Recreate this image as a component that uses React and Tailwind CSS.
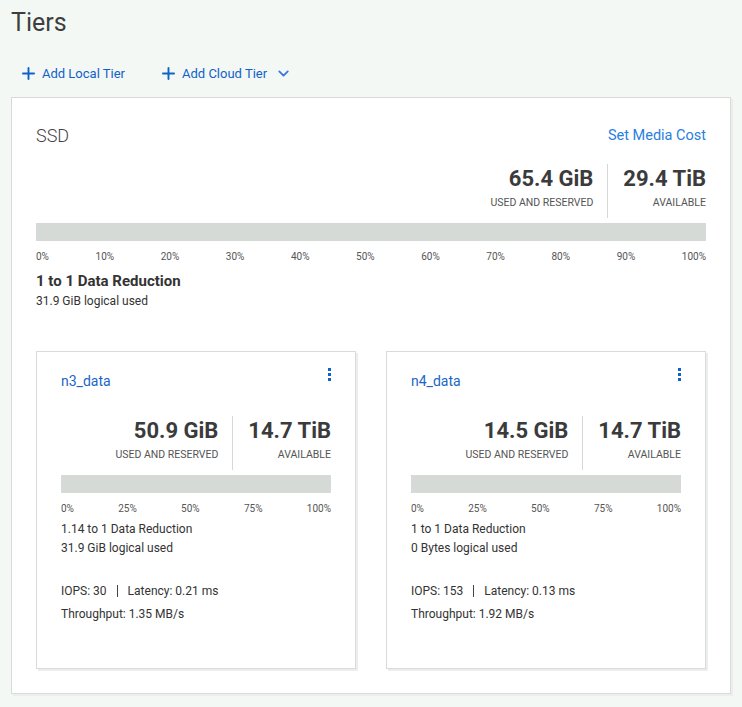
import { ChevronDown, Plus } from 'lucide-react'

const font = { fontFamily: 'Roboto, "Liberation Sans", sans-serif' }

function Stats({ used, available }) {
  return (
    <div className="flex justify-end">
      <div className="flex flex-col items-end pr-[14px]">
        <span className="font-bold text-[#3b3b3b] text-[22px] leading-none mt-[4px]">{used}</span>
        <span className="text-[10.5px] leading-[11px] text-[#555] mt-[7px]">USED AND RESERVED</span>
        <span className="h-[10px]" />
      </div>
      <div className="w-px bg-[#d5d8d6]" />
      <div className="flex flex-col items-end pl-[15px]">
        <span className="font-bold text-[#3b3b3b] text-[22px] leading-none mt-[4px]">{available}</span>
        <span className="text-[10.5px] leading-[11px] text-[#555] mt-[7px]">AVAILABLE</span>
        <span className="h-[10px]" />
      </div>
    </div>
  )
}

function Bar({ ticks }) {
  return (
    <div>
      <div className="h-[18px] bg-[#d5dad7]" />
      <div className="flex justify-between mt-[9px] text-[10px] text-[#555] leading-[14px]">
        {ticks.map(t => <span key={t}>{t}</span>)}
      </div>
    </div>
  )
}

function Kebab() {
  return (
    <div className="flex flex-col gap-[2px] items-center pt-[2px]">
      <span className="w-[3px] h-[3px] bg-[#0f62c9]" />
      <span className="w-[3px] h-[3px] bg-[#0f62c9]" />
      <span className="w-[3px] h-[3px] bg-[#0f62c9]" />
    </div>
  )
}

function AggrCard({ name, used, available, reduction, logical, iops, latency, throughput }) {
  const ticks = ['0%', '25%', '50%', '75%', '100%']
  return (
    <div className="bg-white border border-[#d8dbd9] shadow-[2px_2px_0_#eceeed] h-[318px] px-[24px] pt-[14px]">
      <div className="flex justify-between items-start">
        <a className="text-[14px] text-[#1a66c7] mt-[5px]">{name}</a>
        <Kebab />
      </div>
      <div className="mt-[24px]">
        <Stats used={used} available={available} />
      </div>
      <div className="mt-[5px]">
        <Bar ticks={ticks} />
      </div>
      <div className="text-[12px] text-[#333] mt-[4px] leading-[19px]">
        <div>{reduction}</div>
        <div>{logical}</div>
      </div>
      <div className="text-[12px] text-[#333] mt-[24px] flex items-center">
        <span>IOPS: {iops}</span>
        <span className="mx-[10px] w-px h-[12px] bg-[#444]" />
        <span>Latency: {latency}</span>
      </div>
      <div className="text-[12px] text-[#333] mt-[5px]">Throughput: {throughput}</div>
    </div>
  )
}

export default function App() {
  const ssdTicks = ['0%', '10%', '20%', '30%', '40%', '50%', '60%', '70%', '80%', '90%', '100%']
  return (
    <div className="min-h-[707px] bg-[#f4f8f5] px-[11px] pt-[8px]" style={font}>
      <h1 className="text-[25px] text-[#3d3f3e] leading-[30px]">Tiers</h1>
      <div className="flex items-center gap-[34px] mt-[26px] pl-[8px] text-[13px] text-[#0f62c9]">
        <button className="flex items-center gap-[4px]">
          <Plus size={19} strokeWidth={2.4} />
          <span>Add Local Tier</span>
        </button>
        <button className="flex items-center gap-[4px]">
          <Plus size={19} strokeWidth={2.4} />
          <span>Add Cloud Tier</span>
          <ChevronDown size={17} strokeWidth={2.6} className="ml-[4px] text-[#3a78e0]" />
        </button>
      </div>
      <div className="mt-[13px] bg-white border border-[#d8dbd9] shadow-[2px_2px_0_#eceeed] px-[24px] pt-[24px] pb-[24px]">
        <div className="flex justify-between items-center">
          <span className="text-[18px] text-[#444] font-light">SSD</span>
          <a className="text-[14.5px] text-[#2b7de0] mt-[2px]">Set Media Cost</a>
        </div>
        <div className="mt-[15px]">
          <Stats used="65.4 GiB" available="29.4 TiB" />
        </div>
        <div className="mt-[5px]">
          <Bar ticks={ssdTicks} />
        </div>
        <div className="mt-[6px] text-[15px] font-bold text-[#333]">1 to 1 Data Reduction</div>
        <div className="text-[12px] text-[#333]">31.9 GiB logical used</div>
        <div className="grid grid-cols-2 gap-[30px] mt-[41px]">
          <AggrCard name="n3_data" used="50.9 GiB" available="14.7 TiB" reduction="1.14 to 1 Data Reduction" logical="31.9 GiB logical used" iops="30" latency="0.21 ms" throughput="1.35 MB/s" />
          <AggrCard name="n4_data" used="14.5 GiB" available="14.7 TiB" reduction="1 to 1 Data Reduction" logical="0 Bytes logical used" iops="153" latency="0.13 ms" throughput="1.92 MB/s" />
        </div>
      </div>
    </div>
  )
}
